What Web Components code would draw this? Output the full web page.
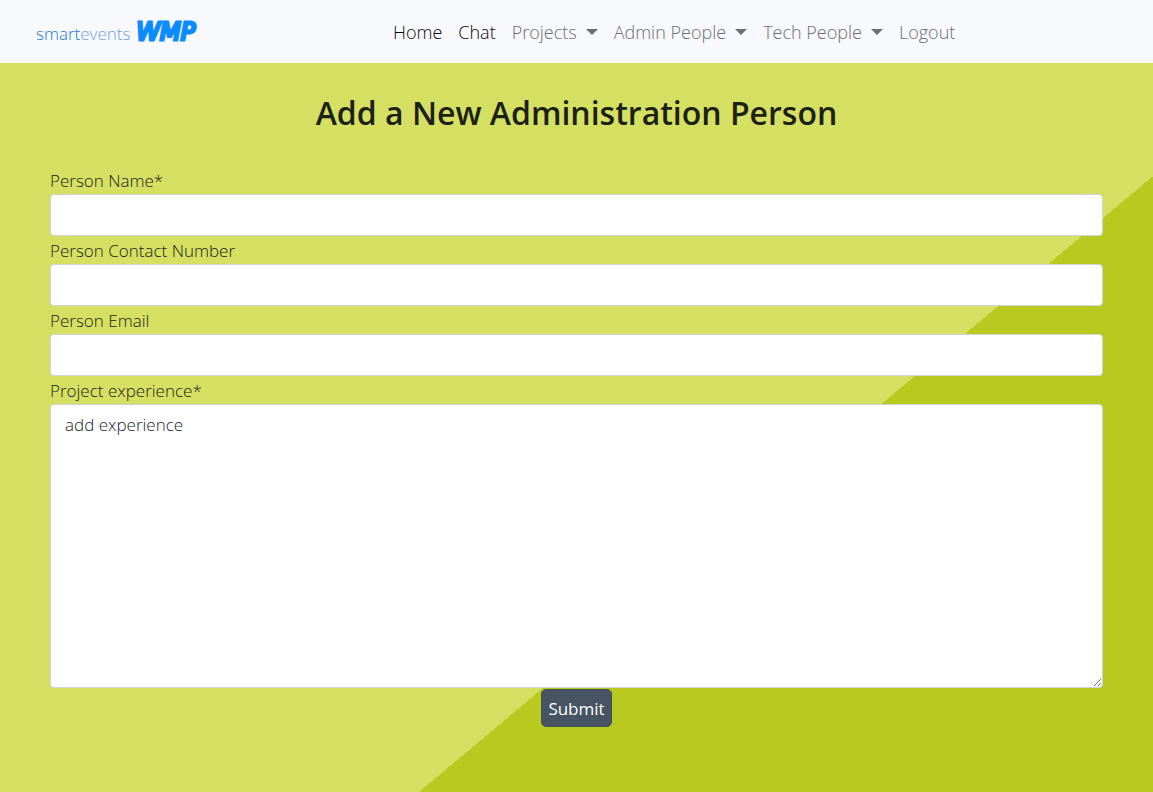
<!DOCTYPE html>
<html lang="en">
<head>
<meta charset="utf-8">
<meta name="viewport" content="width=device-width, initial-scale=1">
<title>Add a New Administration Person</title>
<style>
  body {
    margin: 0;
    min-height: 100vh;
    font: 300 17px/26px "Open Sans", "Noto Sans", sans-serif;
    color: #1c2117;
    background: linear-gradient(140deg, #d5e063 65%, #b8ca1f 65%);
  }
</style>
</head>
<body>
<site-header>
  <nav-link href="#home" active>Home</nav-link>
  <nav-link href="#chat" active>Chat</nav-link>
  <nav-link href="#projects" dropdown>Projects</nav-link>
  <nav-link href="#admin" dropdown>Admin People</nav-link>
  <nav-link href="#tech" dropdown>Tech People</nav-link>
  <nav-link href="#logout">Logout</nav-link>
</site-header>
<person-form heading="Add a New Administration Person">
  <form-field label="Person Name*"></form-field>
  <form-field label="Person Contact Number" type="tel"></form-field>
  <form-field label="Person Email" type="email"></form-field>
  <form-field label="Project experience*" type="textarea" value="add experience"></form-field>
</person-form>

<script>
class SiteHeader extends HTMLElement {
  constructor() {
    super();
    this.attachShadow({ mode: "open" }).innerHTML = `
      <style>
        :host { display: block; background: #f8f9fc; }
        header { display: flex; align-items: center; gap: 18px; padding: 0 18px 0 36px; min-height: 63px; }
        .brand { display: flex; align-items: center; gap: 6px; color: #1a7bd8; text-decoration: none; white-space: nowrap; }
        .name { padding-top: 4px; }
        .light { color: #6f9fe6; }
        .mark { font: italic 400 24px/26px "DejaVu Sans", sans-serif; color: #0b8bff; -webkit-text-stroke: 3px #0b8bff; }
        nav { flex: 1; display: flex; flex-wrap: wrap; justify-content: center; gap: 0 16px; font-size: 18px; }
      </style>
      <header>
        <a class="brand" href="#"><span class="name">smart<span class="light">events</span></span><span class="mark">WMP</span></a>
        <nav aria-label="Main"><slot></slot></nav>
      </header>`;
  }
}
class NavLink extends HTMLElement {
  constructor() {
    super();
    this.attachShadow({ mode: "open" }).innerHTML = `
      <style>
        :host { display: block; color: #6c6e71; }
        :host([active]) { color: #08090a; }
        a { display: flex; align-items: center; gap: 9px; color: inherit; text-decoration: none; white-space: nowrap; }
        i { display: none; border: 6px solid transparent; border-top-color: #6c6e70; border-bottom: 0; }
        :host([dropdown]) i { display: block; }
      </style>
      <a><slot></slot><i></i></a>`;
  }
  connectedCallback() {
    this.shadowRoot.querySelector("a").href = this.getAttribute("href");
  }
}
class FormField extends HTMLElement {
  constructor() {
    super();
    this.attachShadow({ mode: "open" });
  }
  connectedCallback() {
    const type = this.getAttribute("type") || "text";
    const area = type === "textarea";
    this.shadowRoot.innerHTML = `
      <style>
        :host { display: block; }
        label { display: block; padding-top: 2px; }
        input, textarea {
          display: block; box-sizing: border-box; width: 100%; margin: 0; padding: 7px 14px;
          border: 1px solid #ced4da; border-radius: 4px; background: #fff; color: #212529; font: inherit;
        }
        input { height: 42px; }
        textarea { height: 284px; resize: vertical; }
      </style>
      <label for="control"></label>
      ${area ? '<textarea id="control"></textarea>' : '<input id="control">'}`;
    this.shadowRoot.querySelector("label").textContent = this.getAttribute("label");
    const control = this.shadowRoot.getElementById("control");
    if (!area) control.type = type;
    control.value = this.getAttribute("value") || "";
  }
}
class PersonForm extends HTMLElement {
  constructor() {
    super();
    this.attachShadow({ mode: "open" }).innerHTML = `
      <style>
        :host { display: block; padding: 28px 50px 64px; }
        h1 { margin: 0 0 31px; font-size: 32px; line-height: 44px; font-weight: 600; text-align: center; }
        form { display: flex; flex-direction: column; }
        button {
          align-self: center; height: 38px; margin-top: 1px; padding: 2px 6px 0; border: 1px solid #40505f;
          border-radius: 5px; background: #475463; color: #fff; font: inherit; font-weight: 400;
        }
      </style>
      <h1></h1>
      <form><slot></slot><button type="submit">Submit</button></form>`;
  }
  connectedCallback() {
    this.shadowRoot.querySelector("h1").textContent = this.getAttribute("heading");
  }
}
customElements.define("site-header", SiteHeader);
customElements.define("nav-link", NavLink);
customElements.define("form-field", FormField);
customElements.define("person-form", PersonForm);
</script>
</body>
</html>
